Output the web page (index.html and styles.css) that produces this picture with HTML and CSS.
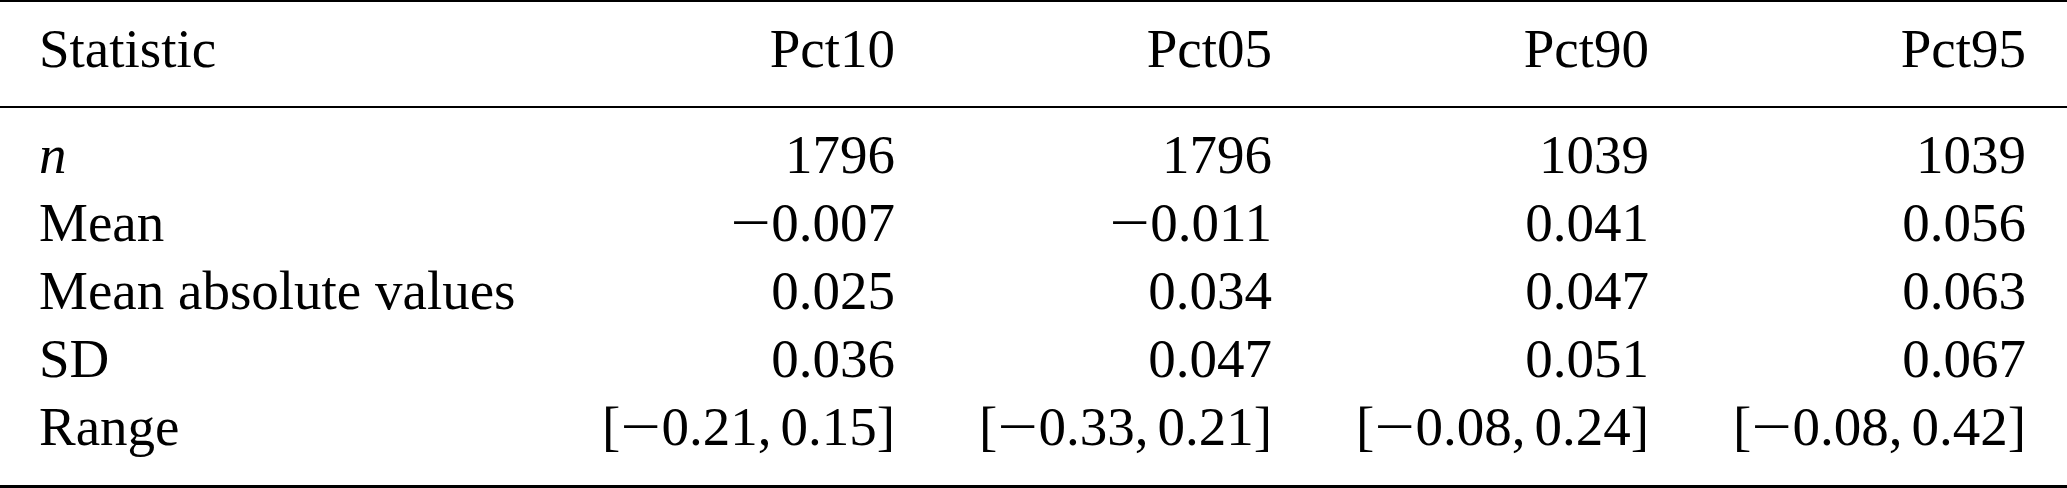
FILE: index.html
```html
<!DOCTYPE html>
<html>
<head>
<meta charset="utf-8">
<link rel="stylesheet" href="styles.css">
</head>
<body>
<div class="table">
  <div class="head">
    <div class="row">
      <div class="label">Statistic</div>
      <div class="num">Pct10</div>
      <div class="num">Pct05</div>
      <div class="num">Pct90</div>
      <div class="num">Pct95</div>
    </div>
  </div>
  <div class="body">
    <div class="row">
      <div class="label"><i>n</i></div>
      <div class="num">1796</div>
      <div class="num">1796</div>
      <div class="num">1039</div>
      <div class="num">1039</div>
    </div>
    <div class="row">
      <div class="label">Mean</div>
      <div class="num"><span class="minus">−</span>0.007</div>
      <div class="num"><span class="minus">−</span>0.011</div>
      <div class="num">0.041</div>
      <div class="num">0.056</div>
    </div>
    <div class="row">
      <div class="label">Mean absolute values</div>
      <div class="num">0.025</div>
      <div class="num">0.034</div>
      <div class="num">0.047</div>
      <div class="num">0.063</div>
    </div>
    <div class="row">
      <div class="label">SD</div>
      <div class="num">0.036</div>
      <div class="num">0.047</div>
      <div class="num">0.051</div>
      <div class="num">0.067</div>
    </div>
    <div class="row">
      <div class="label">Range</div>
      <div class="num">[<span class="minus">−</span>0.21,<span class="thin"></span>0.15]</div>
      <div class="num">[<span class="minus">−</span>0.33,<span class="thin"></span>0.21]</div>
      <div class="num">[<span class="minus">−</span>0.08,<span class="thin"></span>0.24]</div>
      <div class="num">[<span class="minus">−</span>0.08,<span class="thin"></span>0.42]</div>
    </div>
  </div>
</div>
</body>
</html>
```

FILE: styles.css
```css
html, body {
  margin: 0;
  padding: 0;
  background: #fff;
}
body {
  width: 2067px;
  height: 488px;
  overflow: hidden;
  font-family: "Liberation Serif", "Times New Roman", serif;
  font-size: 55px;
  line-height: 68px;
  color: #000;
}
.table {
  border-top: 2px solid #000;
  border-bottom: 3px solid #000;
}
.head {
  padding: 13px 0 23px;
  border-bottom: 2px solid #000;
}
.body {
  padding: 13px 0 24px;
}
.row {
  display: grid;
  grid-template-columns: minmax(0, 1fr) repeat(4, 377px);
  padding: 0 41px 0 39px;
  height: 68px;
}
.label {
  text-align: left;
  white-space: nowrap;
}
.num {
  text-align: right;
  white-space: nowrap;
}
.minus {
  display: inline-block;
  width: 41px;
  text-align: center;
  transform: scaleX(1.3);
}
.thin {
  display: inline-block;
  width: 9px;
}
```
